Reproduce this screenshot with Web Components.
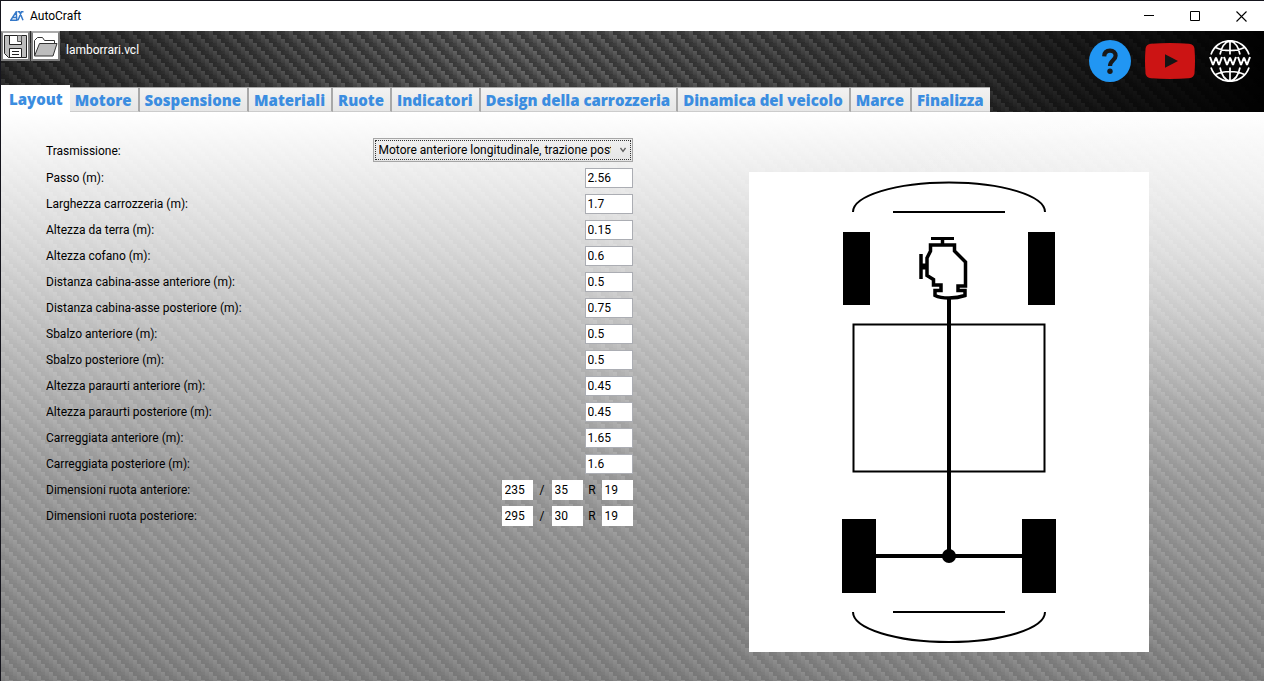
<!DOCTYPE html>
<html lang="it">
<head>
<meta charset="utf-8">
<title>AutoCraft</title>
<style>
:root {
  --ui-font: Roboto, "Open Sans", "Liberation Sans", sans-serif;
  --tab-font: "Open Sans", "Noto Sans", sans-serif;
  --accent: #3b8de0;
  --weave: url("data:image/svg+xml,%3Csvg xmlns='http://www.w3.org/2000/svg' width='16' height='16'%3E%3Cdefs%3E%3ClinearGradient id='g' x1='0' y1='0' x2='0' y2='1'%3E%3Cstop offset='0' stop-color='%23686868'/%3E%3Cstop offset='1' stop-color='%234c4c4c'/%3E%3C/linearGradient%3E%3ClinearGradient id='h' x1='0' y1='0' x2='1' y2='0'%3E%3Cstop offset='0' stop-color='%233a3a3a'/%3E%3Cstop offset='1' stop-color='%23484848'/%3E%3C/linearGradient%3E%3C/defs%3E%3Crect width='16' height='16' fill='%233c3c3c'/%3E%3Cg fill='url(%23h)'%3E%3Crect x='4' y='0' width='8' height='3'/%3E%3Crect x='8' y='4' width='8' height='3'/%3E%3Crect x='12' y='8' width='8' height='3'/%3E%3Crect x='-4' y='8' width='8' height='3'/%3E%3Crect x='0' y='12' width='8' height='3'/%3E%3C/g%3E%3Cg fill='url(%23g)'%3E%3Crect x='0' y='0' width='4' height='8'/%3E%3Crect x='4' y='4' width='4' height='8'/%3E%3Crect x='8' y='8' width='4' height='8'/%3E%3Crect x='12' y='12' width='4' height='8'/%3E%3Crect x='12' y='-4' width='4' height='8'/%3E%3C/g%3E%3C/svg%3E");
}
body { margin: 0; font: 12px/16px var(--ui-font); color: #000; }
</style>
</head>
<body>
<app-window>
  <title-bar slot="title">AutoCraft</title-bar>
  <app-header slot="header">
    <tool-bar slot="tools">lamborrari.vcl</tool-bar>
    <tab-strip slot="tabs" tabs="Layout|Motore|Sospensione|Materiali|Ruote|Indicatori|Design della carrozzeria|Dinamica del veicolo|Marce|Finalizza"></tab-strip>
    <help-links slot="links"></help-links>
  </app-header>
  <layout-form slot="form">
    <select-field label="Trasmissione:" value="Motore anteriore longitudinale, trazione posteriore"></select-field>
    <number-field label="Passo (m):" value="2.56"></number-field>
    <number-field label="Larghezza carrozzeria (m):" value="1.7"></number-field>
    <number-field label="Altezza da terra (m):" value="0.15"></number-field>
    <number-field label="Altezza cofano (m):" value="0.6"></number-field>
    <number-field label="Distanza cabina-asse anteriore (m):" value="0.5"></number-field>
    <number-field label="Distanza cabina-asse posteriore (m):" value="0.75"></number-field>
    <number-field label="Sbalzo anteriore (m):" value="0.5"></number-field>
    <number-field label="Sbalzo posteriore (m):" value="0.5"></number-field>
    <number-field label="Altezza paraurti anteriore (m):" value="0.45"></number-field>
    <number-field label="Altezza paraurti posteriore (m):" value="0.45"></number-field>
    <number-field label="Carreggiata anteriore (m):" value="1.65"></number-field>
    <number-field label="Carreggiata posteriore (m):" value="1.6"></number-field>
    <tyre-field label="Dimensioni ruota anteriore:" value="235 35 19"></tyre-field>
    <tyre-field label="Dimensioni ruota posteriore:" value="295 30 19"></tyre-field>
  </layout-form>
  <chassis-view slot="view"></chassis-view>
</app-window>

<script>
class Base extends HTMLElement {
  connectedCallback() {
    if (this.shadowRoot) return;
    this.attachShadow({ mode: 'open' }).innerHTML =
      `<style>*{box-sizing:border-box}${this.css()}</style>${this.html()}`;
  }
}
const define = (name, css, html) => customElements.define(name, class extends Base {
  css() { return css; }
  html() { return typeof html === 'function' ? html(this) : html; }
});

define('app-window', `
  :host { display: flex; flex-direction: column; min-height: 100vh; box-sizing: border-box;
    border: solid #15151d; border-width: 1px 0 0 1px; }
  main { flex: 1; display: grid; grid-template-columns: 1fr 1fr; align-items: start; padding: 26px 0 28px;
    background:
      radial-gradient(ellipse 30% 40% at 100% 12%, rgba(255,255,255,.35), rgba(255,255,255,0)),
      linear-gradient(rgba(255,255,255,1), rgba(255,255,255,.84) 17%, rgba(255,255,255,.61) 42%, rgba(255,255,255,.43) 65%, rgba(255,255,255,.28)),
      linear-gradient(rgba(80,80,80,.35), rgba(80,80,80,.35)),
      var(--weave); }
  ::slotted(chassis-view) { justify-self: center; margin: 34px 0 0 2px; }`,
  `<slot name="title"></slot><slot name="header"></slot>
   <main><slot name="form"></slot><slot name="view"></slot></main>`);

define('title-bar', `
  :host { display: flex; align-items: center; height: 30px; padding-left: 9px; background: #fff; }
  .mark { width: 14px; height: 10px; margin-right: 6px; }
  span { flex: 1; }
  button { width: 46px; height: 30px; padding: 0; border: 0; background: none; display: grid; place-items: center; }`,
  `<svg class="mark" viewBox="0 0 14 10" fill="none" stroke="#3478c8" stroke-width="1.5"><path d="M.8 9.2 6.2.8l.6 8.4zM3 6.5h4M7.5.8h2l3.500 8.400M13.500.8h-2L8 9.200"/></svg>
   <span><slot></slot></span>
   <button aria-label="Riduci a icona"><svg width="10" height="10"><path d="M0 4.500h10" stroke="#000"/></svg></button>
   <button aria-label="Ingrandisci"><svg width="10" height="10"><path d="M.5.5h9v9h-9z" fill="none" stroke="#000"/></svg></button>
   <button aria-label="Chiudi"><svg width="11" height="11"><path d="m.5.5 10 10m0-10-10 10" stroke="#000" stroke-width="1.100"/></svg></button>`);

define('app-header', `
  :host { display: flex; justify-content: space-between; height: 81px;
    background:
      linear-gradient(90deg, rgba(0,0,0,.5), rgba(0,0,0,.2) 23%, rgba(0,0,0,0) 40%, rgba(0,0,0,.2) 60%, rgba(0,0,0,.5) 78%, rgba(0,0,0,.78) 88%, rgba(0,0,0,.99)),
      var(--weave); }
  .left { display: flex; flex-direction: column; justify-content: space-between; }`,
  `<div class="left"><slot name="tools"></slot><slot name="tabs"></slot></div><slot name="links"></slot>`);

define('tool-bar', `
  :host { display: flex; align-items: center; color: #fff; }
  button { width: 29px; height: 30px; padding: 0; background: #fff; border: 2px solid #7d7d7d; border-top-color: #aaa;
    margin-right: 1px; display: grid; place-items: center; }
  span { margin: 8px 0 0 5px; }`,
  `<button aria-label="Salva"><svg width="23" height="23" viewBox="0 0 23 23" fill="#bdbdbd" stroke="#222"><path d="M.5.5h22v22H4.500l-4-4z"/><path d="M5.500.5h12v9h-12z" fill="#fff"/><path d="M13.500.5h4v6h-4z" stroke="#555"/><path d="M5.500 13.500h12v9h-12z" fill="#fff"/><path d="M8 16.500h7M8 19.500h7"/></svg></button>
   <button aria-label="Apri"><svg width="25" height="21" viewBox="0 0 25 21" fill="#fff" stroke="#333"><path d="M1.500 19.500v-15l3-3h5l2 3h10v3"/><path d="m6.500 7.500h17.500l-4 12.500H1.500z" fill="#bdbdbd"/></svg></button>
   <span><slot></slot></span>`);

define('tab-strip', `
  nav { display: flex; align-items: flex-end; }
  button { height: 25px; padding: 1px 6px 0 5px; border: solid #a8a8a8; border-width: 1px 2px 1px 0; border-bottom-color: #ccc; background: linear-gradient(#f2f2f2, #e6e6e6);
    color: var(--accent); font: 800 15px/20px var(--tab-font); white-space: nowrap; }
  button:last-child { border-right-width: 0; }
  button[aria-selected=true] { height: 27px; padding: 0 7px 0 8px; border-width: 0; background: #fff; }`,
  el => `<nav role="tablist">${el.getAttribute('tabs').split('|').map((t, i) =>
    `<button role="tab" aria-selected="${!i}">${t}</button>`).join('')}</nav>`);

define('help-links', `
  :host { display: flex; gap: 14px; padding: 9px 13px 0 0; }
  a { display: flex; align-items: center; height: 42px; }`,
  `<a href="#guida" aria-label="Guida"><svg width="42" height="42" viewBox="0 0 42 42"><circle cx="21" cy="21" r="21" fill="#2196f3"/><path d="M15.200 16.300c.2-4 2.600-5.600 5.800-5.600 3.500 0 5.600 2 5.600 5 0 4.600-5.600 4.600-5.600 10.300" fill="none" stroke="#191919" stroke-width="4.200"/><circle cx="21" cy="31.200" r="2.700" fill="#191919"/></svg></a>
   <a href="#video" aria-label="Video"><svg width="50" height="36" viewBox="0 0 50 36"><path d="M6 .8Q25-.6 44 .8q5 .4 5.500 5Q50.500 18 49.500 30.200q-.5 4.600-5.500 5-19 1.400-38 0-5-.4-5.500-5Q-.5 18 .5 5.800 1 1.200 6 .8z" fill="#cc1414"/><path d="M20 11.300 33 18l-13 6.700z" fill="#151515"/></svg></a>
   <a href="#web" aria-label="Sito web"><svg width="42" height="42" viewBox="0 0 42 42" fill="none" stroke="#fff" stroke-width="1.700"><path d="M2 14.500a20 20 0 0 1 38 0M2 27.500a20 20 0 0 0 38 0M21 1v13.500M21 27.500V41M11 14.500C12.500 7 16 2 21 1c5 1 8.500 6 10 13.500M11 27.500C12.500 35 16 40 21 41c5-1 8.500-6 10-13.500M6.500 7.500c8 4 21 4 29 0M6.500 34.500c8-4 21-4 29 0"/><path stroke-width="2" stroke-linejoin="bevel" d="m1 17 3 8 3-7.500 3 7.500 3-8M15 17l3 8 3-7.500 3 7.500 3-8M29 17l3 8 3-7.500 3 7.500 3-8"/></svg></a>`);

define('layout-form', `:host { display: flex; flex-direction: column; gap: 6px; padding-left: 45px; }`, `<slot></slot>`);

const row = `
  :host { display: flex; align-items: center; justify-content: space-between; }
  input { height: 20px; padding: 0 2px; border: 1px solid #abadb3; border-radius: 0; background: #fff; font: inherit; color: #000; outline: 0; }`;

define('select-field', row + `
  label { padding-top: 2px; }
  div { position: relative; width: 260px; }
  select { display: block; appearance: none; width: 100%; height: 24px; padding: 0 21px 0 5px; border: 1px solid #a6a6a6; border-radius: 0;
    background: linear-gradient(#f0f0f0, #e5e5e5); font: inherit; color: #000; outline: 1px dotted #333; outline-offset: -3px; text-overflow: clip; }
  svg { position: absolute; right: 7px; top: 9px; pointer-events: none; }`,
  el => `<label for="f">${el.getAttribute('label')}</label>
   <div><select id="f"><option>${el.getAttribute('value')}</option></select>
   <svg width="6" height="6" viewBox="0 0 6 6"><path d="m.5 1 2.500 3.500L5.500 1" fill="none" stroke="#606060" stroke-width="1.300"/></svg></div>`);

define('number-field', row + `input { width: 48px; }`,
  el => `<label for="f">${el.getAttribute('label')}</label><input id="f" value="${el.getAttribute('value')}">`);

define('tyre-field', row + `
  div { display: flex; align-items: center; }
  input { width: 31px; border-color: #fff; }
  span { width: 19px; text-align: center; }`,
  el => {
    const [w, p, d] = el.getAttribute('value').split(' ');
    return `<label for="f">${el.getAttribute('label')}</label><div><input id="f" value="${w}"><span>/</span><input aria-label="Profilo" value="${p}"><span>R</span><input aria-label="Diametro" value="${d}"></div>`;
  });

define('chassis-view', `:host { display: block; background: #fff; } svg { display: block; }`,
  `<svg width="400" height="480" viewBox="0 0 400 480" role="img" aria-label="Schema del telaio">
    <g fill="none" stroke="#000" stroke-width="2">
      <path d="M104 40A96 29.500 0 0 1 296 40M144 40h112M104 440A96 30 0 0 0 296 440M144 440h112"/>
      <path d="M104.500 152.500h191v147h-191z"/>
    </g>
    <path d="M94 60h27v73H94zM279 60h27v73h-27zM93 347h34v74H93zM273 347h34v74h-34z"/>
    <path d="M200 126v258M127 384h146" fill="none" stroke="#000" stroke-width="4"/>
    <circle cx="200" cy="384" r="7"/>
    <g fill="none" stroke="#000" stroke-width="3.500">
      <path d="M181.500 73h24v6l11 11v24h-7.500v4.500h7v5q-7 2.500-16 2.500t-14-2.500v-5h6V113h-7.500v-5.500l-6.500-4V86l3.500-7z"/>
      <path d="M182 66.500h23" stroke-width="3"/><path d="M193.500 66v6"/>
      <path d="M172 82v25"/><path d="M172 94.500h7" stroke-width="6"/>
    </g>
  </svg>`);
</script>
</body>
</html>
